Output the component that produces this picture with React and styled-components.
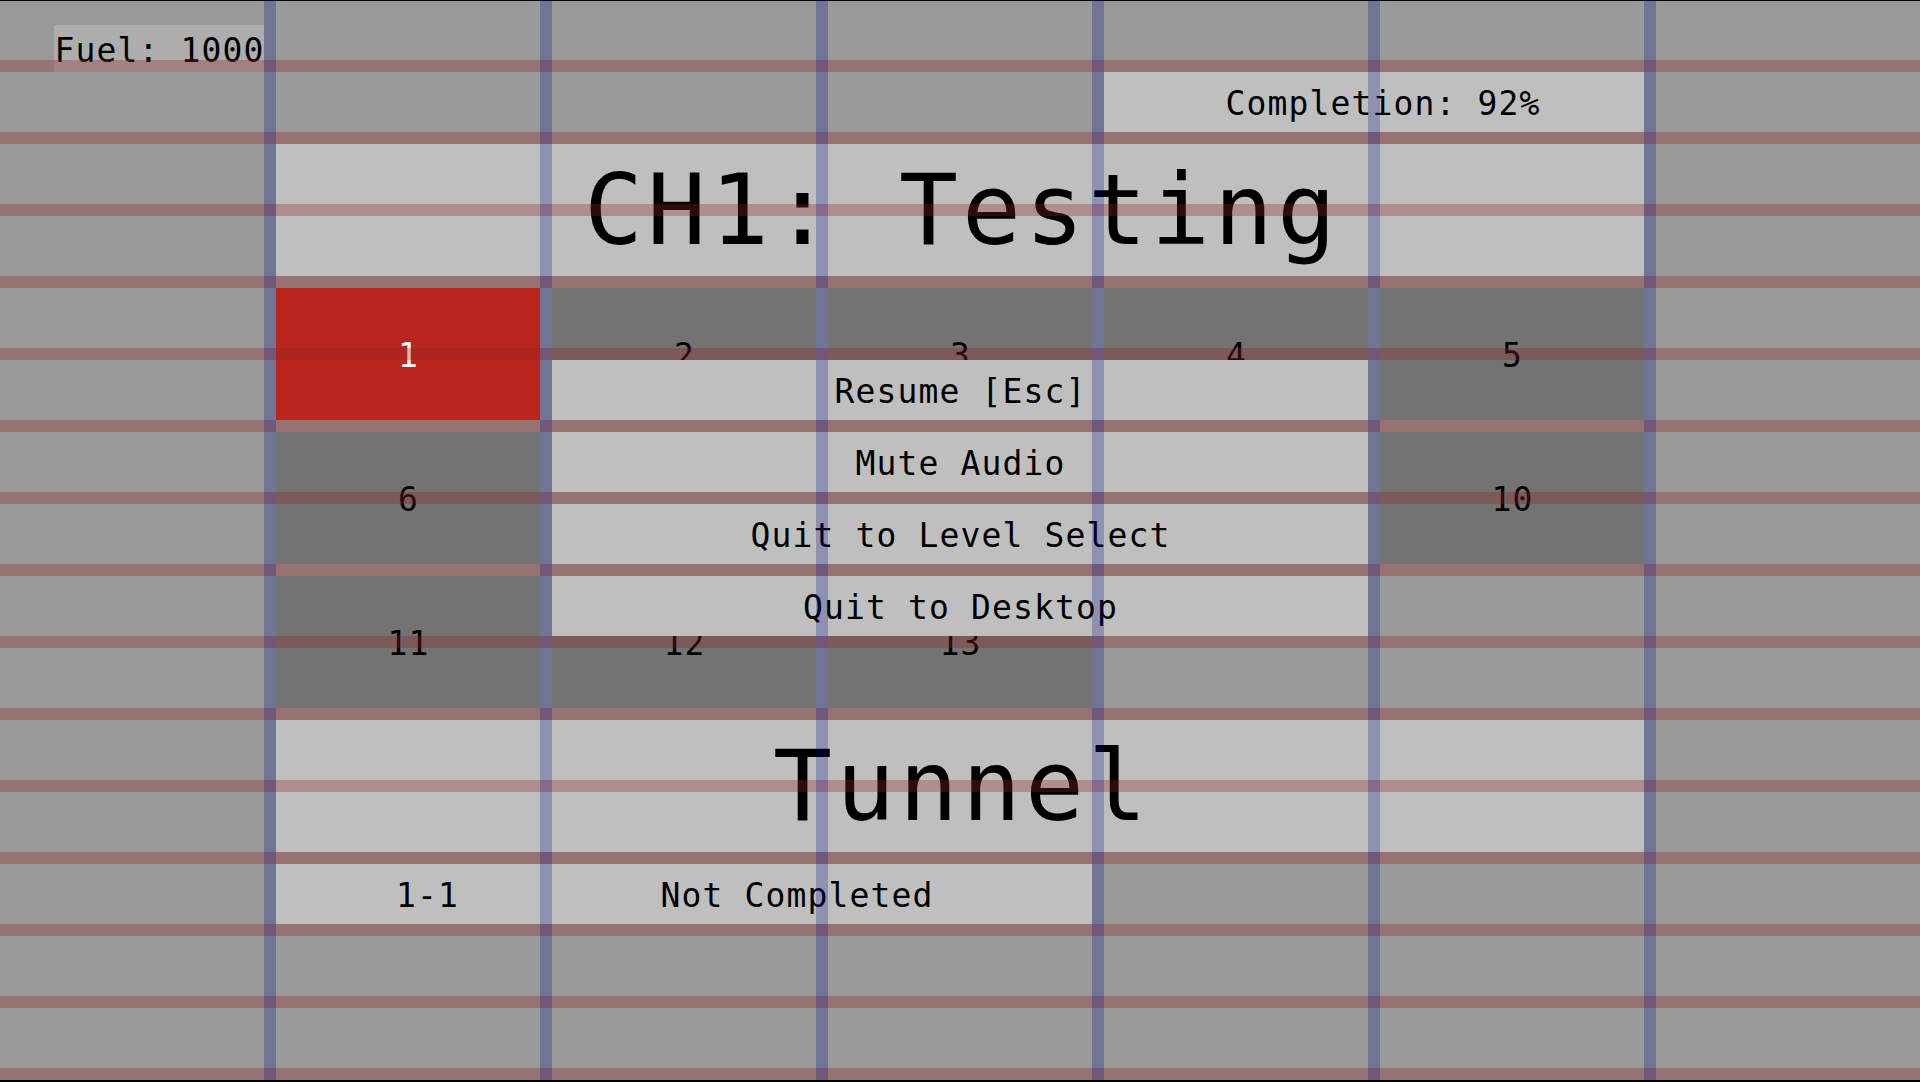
import React from 'react';
import styled, { createGlobalStyle } from 'styled-components';

const GlobalStyle = createGlobalStyle`
  html, body {
    margin: 0;
    padding: 0;
    background: #000;
    overflow: hidden;
  }
  #root {
    width: 1920px;
    height: 1082px;
  }
`;

const FONT = `"DejaVu Sans Mono", "Liberation Mono", monospace`;

const Viewport = styled.div`
  width: 1920px;
  height: 1082px;
  background: #000;
  overflow: hidden;
`;

const Screen = styled.div`
  position: relative;
  width: 1920px;
  height: 1080px;
  background: #999999;
  box-shadow: inset 0 1px 0 #000;
  display: flex;
  flex-direction: column;
  font-family: ${FONT};
  color: #000;
`;

const Label = styled.span`
  font-size: ${(p) => (p.$big ? 98 : 33)}px;
  letter-spacing: ${(p) => (p.$big ? 4 : 1.13)}px;
  padding-left: ${(p) => (p.$big ? 4 : 1.13)}px;
  padding-top: ${(p) => (p.$big ? 0 : 3)}px;
  line-height: 1;
  white-space: pre;
  color: ${(p) => (p.$light ? '#ffffff' : '#000000')};
`;

const HudRow = styled.div`
  height: 72px;
  display: flex;
  align-items: flex-end;
  padding-left: 54px;
  box-sizing: border-box;
`;

const FuelBox = styled.div`
  width: 210px;
  height: 47px;
  background: #adadad;
  display: flex;
  align-items: center;
  justify-content: center;
`;

const CompletionRow = styled.div`
  height: 60px;
  margin-bottom: 12px;
  padding-left: 1104px;
  display: flex;
`;

const CompletionBox = styled.div`
  width: 540px;
  height: 60px;
  background: #bfbfbf;
  display: flex;
  align-items: center;
  justify-content: center;
  padding-left: 17px;
  box-sizing: border-box;
`;

const Banner = styled.div`
  margin-left: 276px;
  width: 1368px;
  height: 132px;
  margin-bottom: 12px;
  background: #bfbfbf;
  display: flex;
  align-items: center;
  justify-content: center;
`;

const LevelArea = styled.div`
  position: relative;
  margin-left: 276px;
  width: 1368px;
  margin-bottom: 12px;
`;

const LevelGrid = styled.div`
  display: grid;
  grid-template-columns: repeat(5, 264px);
  grid-template-rows: repeat(3, 132px);
  gap: 12px;
`;

const Tile = styled.div`
  background: ${(p) => (p.$selected ? '#ba261d' : '#737373')};
  display: flex;
  align-items: center;
  justify-content: center;
`;

const PauseMenu = styled.div`
  position: absolute;
  left: 276px;
  top: 72px;
  width: 816px;
  display: flex;
  flex-direction: column;
  gap: 12px;
  background: #999999;
  z-index: 2;
`;

const MenuButton = styled.button`
  height: 60px;
  margin: 0;
  padding: 0;
  border: none;
  background: #bfbfbf;
  font-family: ${FONT};
  display: flex;
  align-items: center;
  justify-content: center;
  cursor: pointer;
`;

const InfoRow = styled.div`
  margin-left: 276px;
  width: 816px;
  height: 60px;
  background: #bfbfbf;
  display: grid;
  grid-template-columns: 302px 437px;
  align-items: center;
`;

const InfoCell = styled.div`
  display: flex;
  justify-content: center;
`;

const GridOverlay = styled.div`
  position: absolute;
  left: 0;
  top: 0;
  width: 1920px;
  height: 1080px;
  pointer-events: none;
  z-index: 10;
  background:
    linear-gradient(to right, transparent 264px, rgba(8, 8, 134, 0.26) 264px) 0 0 / 276px 100% repeat-x,
    linear-gradient(to bottom, transparent 60px, rgba(143, 36, 36, 0.32) 60px) 0 0 / 100% 72px repeat-y;
`;

const levels = [1, 2, 3, 4, 5, 6, 7, 8, 9, 10, 11, 12, 13];
const menuItems = ['Resume [Esc]', 'Mute Audio', 'Quit to Level Select', 'Quit to Desktop'];

export default function App() {
  return (
    <Viewport>
      <GlobalStyle />
      <Screen>
        <HudRow>
          <FuelBox>
            <Label>Fuel: 1000</Label>
          </FuelBox>
        </HudRow>
        <CompletionRow>
          <CompletionBox>
            <Label>Completion: 92%</Label>
          </CompletionBox>
        </CompletionRow>
        <Banner>
          <Label $big>CH1: Testing</Label>
        </Banner>
        <LevelArea>
          <LevelGrid>
            {levels.map((n) => (
              <Tile key={n} $selected={n === 1}>
                <Label $light={n === 1}>{n}</Label>
              </Tile>
            ))}
          </LevelGrid>
          <PauseMenu>
            {menuItems.map((m) => (
              <MenuButton key={m} type="button">
                <Label>{m}</Label>
              </MenuButton>
            ))}
          </PauseMenu>
        </LevelArea>
        <Banner>
          <Label $big>Tunnel</Label>
        </Banner>
        <InfoRow>
          <InfoCell>
            <Label>1-1</Label>
          </InfoCell>
          <InfoCell>
            <Label>Not Completed</Label>
          </InfoCell>
        </InfoRow>
        <GridOverlay />
      </Screen>
    </Viewport>
  );
}
